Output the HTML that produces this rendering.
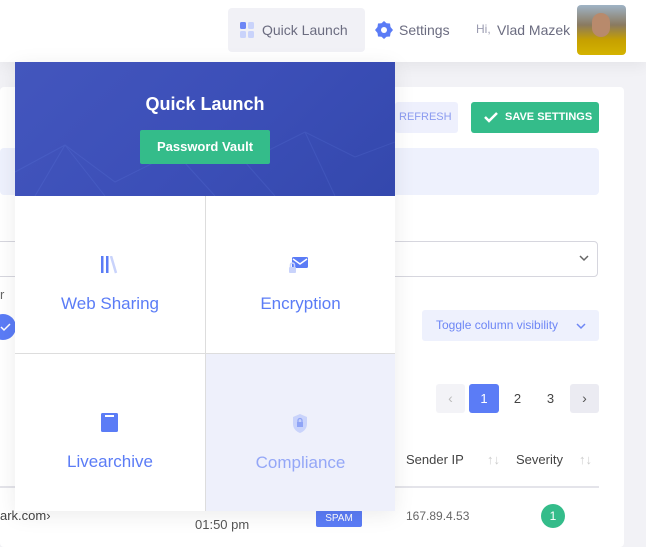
<!DOCTYPE html>
<html><head><style>
*{margin:0;padding:0;box-sizing:border-box}
body{width:646px;height:534px;overflow:hidden;background:#f2f2f6;font-family:"Liberation Sans",sans-serif;position:relative}
.a{position:absolute}
</style></head><body>
<div class="a" style="left:0;top:0;width:646px;height:62px;background:#fff;box-shadow:0 4px 14px rgba(0,0,0,0.06)"></div>
<div class="a" style="left:228px;top:8px;width:137px;height:44px;background:#f1f1f6;border-radius:4px"></div>
<svg class="a" style="left:240px;top:22px" width="15" height="16"><rect x="0" y="0" width="6" height="7" rx="1.5" fill="#6d86f5"/><rect x="8" y="0" width="6" height="7" rx="1.5" fill="#c9d3fb"/><rect x="0" y="9" width="6" height="7" rx="1.5" fill="#c9d3fb"/><rect x="8" y="9" width="6" height="7" rx="1.5" fill="#c9d3fb"/></svg>
<div class="a" style="left:262px;top:22px;font-size:14px;color:#6b6c80">Quick Launch</div>
<svg class="a" style="left:375px;top:21px" width="18" height="18" viewBox="0 0 18 18"><path d="M9 0L11.5 2.2 15 2.5 15.5 6 18 9 15.5 12 15 15.5 11.5 15.8 9 18 6.5 15.8 3 15.5 2.5 12 0 9 2.5 6 3 2.5 6.5 2.2Z" fill="#5b7cf6"/><circle cx="9" cy="9" r="3" fill="#fff"/></svg>
<div class="a" style="left:399px;top:22px;font-size:14px;color:#6b6c80">Settings</div>
<div class="a" style="left:476px;top:22px;font-size:12px;color:#9a9bb0">Hi,</div>
<div class="a" style="left:497px;top:22px;font-size:14px;color:#6b6c80">Vlad Mazek</div>
<div class="a" style="left:577px;top:5px;width:49px;height:50px;border-radius:4px;background:linear-gradient(180deg,#9fb3c6 0%,#8a7a60 40%,#c6a000 70%,#d4b300 100%);overflow:hidden"><div class="a" style="left:15px;top:8px;width:18px;height:24px;border-radius:9px;background:#b88a6c"></div></div>

<div class="a" style="left:0;top:87px;width:624px;height:460px;background:#fff;border-radius:4px"></div>
<div class="a" style="left:395px;top:102px;width:63px;height:31px;background:#eef0fd;border-radius:3px;font-size:11px;color:#8b9bf0;line-height:31px;padding-left:4px">REFRESH</div>
<div class="a" style="left:471px;top:102px;width:128px;height:31px;background:#34bc8a;border-radius:3px;font-size:11px;color:#fff;line-height:31px;font-weight:bold;padding-left:34px">SAVE SETTINGS</div>
<svg class="a" style="left:484px;top:111px" width="14" height="12"><path d="M1 6l4 4 8-8" stroke="#fff" stroke-width="2.5" fill="none"/></svg>
<div class="a" style="left:0;top:148px;width:599px;height:47px;background:#eef1fd;border-radius:4px"></div>
<div class="a" style="left:-5px;top:241px;width:603px;height:36px;border:1px solid #d6d6de;border-radius:4px"></div>
<svg class="a" style="left:579px;top:254px" width="10" height="8"><path d="M1 2l4 4 4-4" stroke="#666" stroke-width="1.5" fill="none"/></svg>
<div class="a" style="left:0;top:287px;font-size:13px;color:#666">r</div>
<div class="a" style="left:-10px;top:314px;width:26px;height:26px;border-radius:13px;background:#5b7cf6"></div>
<svg class="a" style="left:0;top:321px" width="12" height="12"><path d="M1 6l3 3 6-6" stroke="#fff" stroke-width="1.5" fill="none"/></svg>
<div class="a" style="left:422px;top:310px;width:177px;height:31px;background:#eef1fd;border-radius:3px;font-size:12px;color:#6d86f5;line-height:31px;padding-left:14px">Toggle column visibility</div>
<svg class="a" style="left:576px;top:322px" width="10" height="8"><path d="M1 2l4 4 4-4" stroke="#6d86f5" stroke-width="1.5" fill="none"/></svg>
<div class="a" style="left:436px;top:384px;width:29px;height:29px;background:#f3f3f7;border-radius:3px;color:#bbb;text-align:center;line-height:29px;font-size:14px">&lsaquo;</div>
<div class="a" style="left:469px;top:384px;width:30px;height:29px;background:#5b7cf6;border-radius:3px;color:#fff;text-align:center;line-height:29px;font-size:13px">1</div>
<div class="a" style="left:503px;top:384px;width:29px;height:29px;color:#444;text-align:center;line-height:29px;font-size:13px">2</div>
<div class="a" style="left:536px;top:384px;width:29px;height:29px;color:#444;text-align:center;line-height:29px;font-size:13px">3</div>
<div class="a" style="left:570px;top:384px;width:29px;height:29px;background:#ebebf2;border-radius:3px;color:#555;text-align:center;line-height:29px;font-size:14px">&rsaquo;</div>
<div class="a" style="left:406px;top:452px;font-size:13px;color:#444">Sender IP</div>
<div class="a" style="left:487px;top:452px;font-size:13px;color:#ccc">↑↓</div>
<div class="a" style="left:516px;top:452px;font-size:13px;color:#444">Severity</div>
<div class="a" style="left:579px;top:452px;font-size:13px;color:#ccc">↑↓</div>
<div class="a" style="left:0;top:486px;width:599px;height:2px;background:#e4e4ea"></div>
<div class="a" style="left:0;top:508px;font-size:13px;color:#444">ark.com&rsaquo;</div>
<div class="a" style="left:195px;top:517px;font-size:13px;color:#555">01:50 pm</div>
<div class="a" style="left:316px;top:510px;width:46px;height:17px;background:#5b7cf6;border-radius:2px;color:#fff;font-size:10px;text-align:center;line-height:17px">SPAM</div>
<div class="a" style="left:406px;top:509px;font-size:12px;color:#666">167.89.4.53</div>
<div class="a" style="left:541px;top:504px;width:24px;height:24px;border-radius:12px;background:#34bc8a;color:#fff;font-size:12px;text-align:center;line-height:24px">1</div>

<div class="a" style="left:15px;top:62px;width:380px;height:449px;background:#fff;box-shadow:0 4px 20px rgba(0,0,0,0.08)"></div>
<div class="a" style="left:15px;top:62px;width:380px;height:134px;background:linear-gradient(135deg,#4356bd 0%,#3c4fb8 50%,#3448ad 100%);overflow:hidden">
<svg width="380" height="134" style="position:absolute;left:0;top:0;opacity:.12"><path d="M0 110L50 83 100 120 160 90 230 100 290 70 340 95 380 80M50 83L90 134M160 90L200 134M230 100L260 134M290 70L320 134M20 134L50 83" stroke="#7fa0ff" stroke-width="1" fill="none"/></svg>
</div>
<div class="a" style="left:15px;top:94px;width:380px;text-align:center;font-size:18px;color:#fff;font-weight:bold">Quick Launch</div>
<div class="a" style="left:140px;top:130px;width:130px;height:34px;background:#34bc8a;border-radius:2px;color:#fff;font-size:13px;font-weight:bold;text-align:center;line-height:34px">Password Vault</div>
<div class="a" style="left:205px;top:196px;width:1px;height:315px;background:#ddd"></div>
<div class="a" style="left:15px;top:353px;width:380px;height:1px;background:#ddd"></div>
<div class="a" style="left:206px;top:354px;width:189px;height:157px;background:#eef0fb"></div>
<svg class="a" style="left:101px;top:256px" width="19" height="18"><rect x="0" y="0" width="2.5" height="17" fill="#5b7cf6"/><rect x="5" y="0" width="2.5" height="17" fill="#5b7cf6"/><path d="M10 0l5 17" stroke="#c9d3fb" stroke-width="2.5"/></svg>
<div class="a" style="left:15px;top:294px;width:190px;text-align:center;font-size:17px;color:#5b7cf6">Web Sharing</div>
<svg class="a" style="left:289px;top:257px" width="20" height="17"><rect x="3" y="0" width="16" height="11" rx="1.5" fill="#5b7cf6"/><path d="M4 2l7 5 7-5" stroke="#fff" stroke-width="1.5" fill="none"/><rect x="0" y="10" width="7" height="6" rx="1" fill="#c9d3fb"/><path d="M1.5 10V8a2 2 0 014 0v2" stroke="#c9d3fb" stroke-width="1.5" fill="none"/></svg>
<div class="a" style="left:206px;top:294px;width:189px;text-align:center;font-size:17px;color:#5b7cf6">Encryption</div>
<svg class="a" style="left:101px;top:413px" width="18" height="20"><rect x="0" y="0" width="17" height="19" rx="1.5" fill="#5b7cf6"/><rect x="4" y="2" width="9" height="2" fill="#fff"/></svg>
<div class="a" style="left:15px;top:452px;width:190px;text-align:center;font-size:17px;color:#5b7cf6">Livearchive</div>
<svg class="a" style="left:292px;top:414px" width="16" height="20"><path d="M8 0L15 3V10C15 15 11 18 8 19 5 18 1 15 1 10V3Z" fill="#c9d3fb"/><rect x="5" y="8" width="6" height="5" fill="#8fa4f6"/><path d="M6 8V6.5a2 2 0 014 0V8" stroke="#8fa4f6" stroke-width="1.3" fill="none"/></svg>
<div class="a" style="left:206px;top:453px;width:189px;text-align:center;font-size:17px;color:#94a7f7">Compliance</div>
</body></html>
